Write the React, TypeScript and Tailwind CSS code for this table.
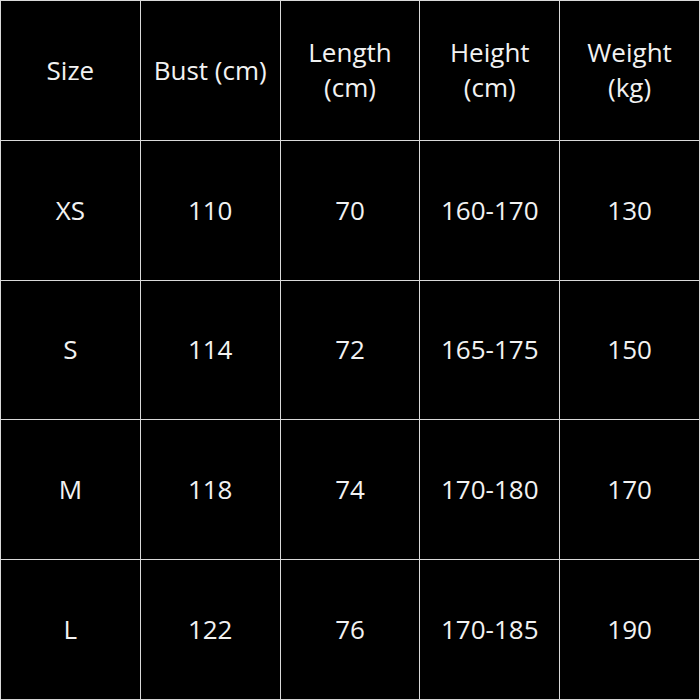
import React from "react";

const rows = [
  ["Size", "Bust (cm)", "Length\n(cm)", "Height\n(cm)", "Weight\n(kg)"],
  ["XS", "110", "70", "160-170", "130"],
  ["S", "114", "72", "165-175", "150"],
  ["M", "118", "74", "170-180", "170"],
  ["L", "122", "76", "170-185", "190"],
];

export default function App() {
  return (
    <div
      className="w-[700px] h-[700px] bg-[#d9d9d9] p-px grid grid-cols-5 grid-rows-5 gap-px"
      style={{ fontFamily: '"Open Sans", "Liberation Sans", sans-serif' }}
    >
      {rows.flatMap((r, i) =>
        r.map((c, j) => (
          <div
            key={`${i}-${j}`}
            className="bg-black flex items-center justify-center text-center text-[#f2f2f2] text-[26px] leading-[35px] whitespace-pre-line"
          >
            {c}
          </div>
        ))
      )}
    </div>
  );
}
